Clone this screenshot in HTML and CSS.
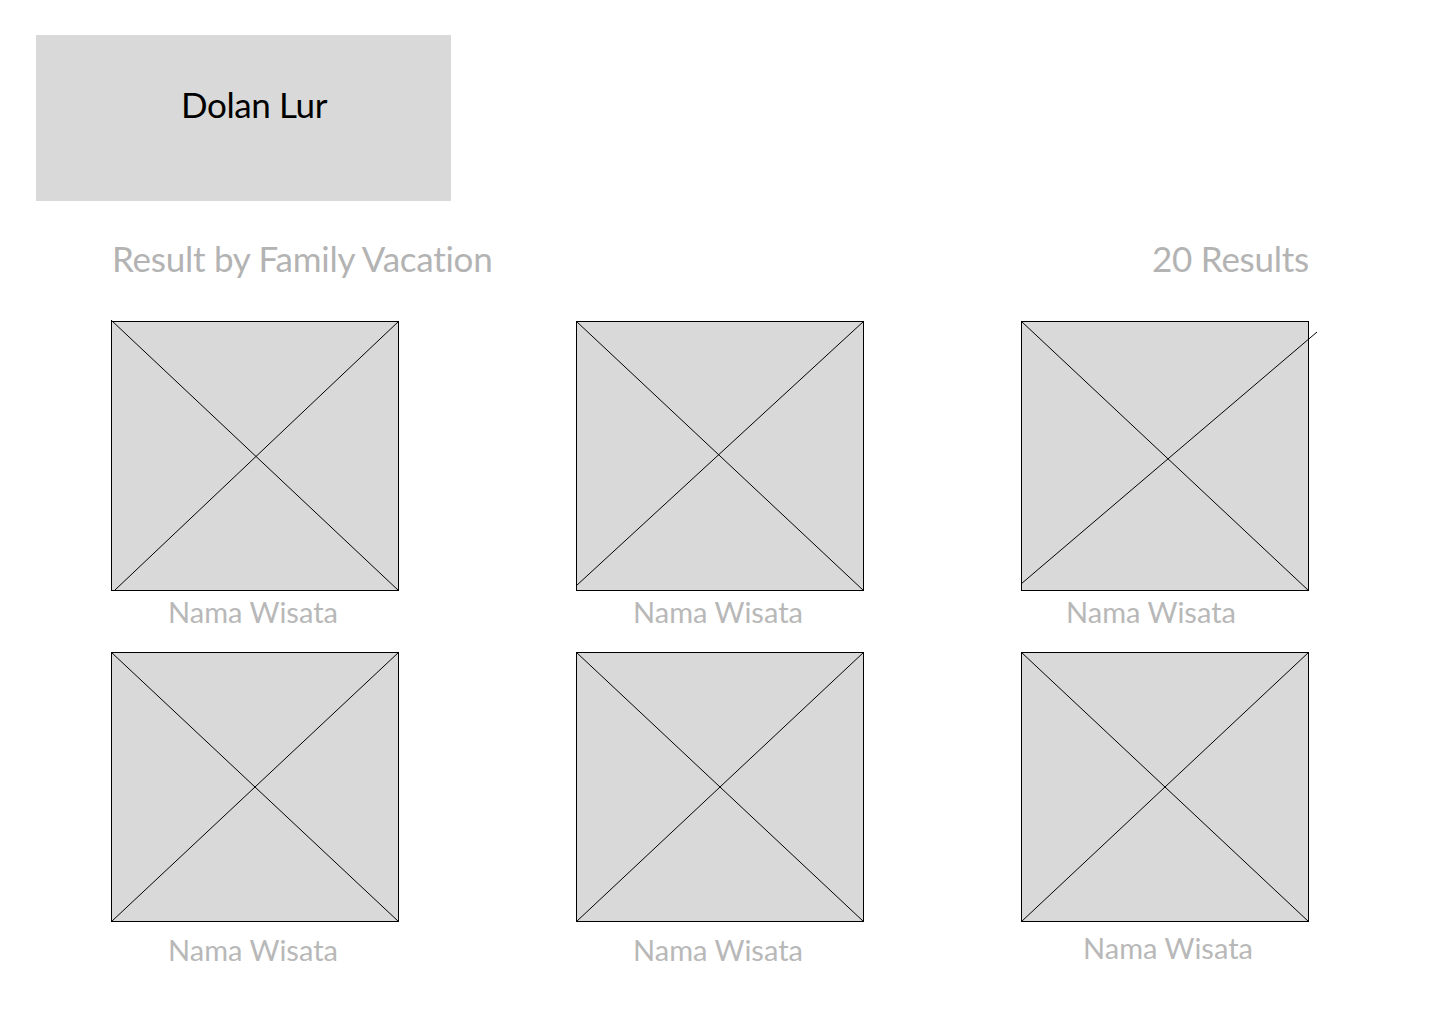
FILE: index.html
```html
<!DOCTYPE html>
<html lang="id">
<head>
<meta charset="utf-8">
<title>Dolan Lur - Result by Family Vacation</title>
<link rel="stylesheet" href="styles.css">
</head>
<body>
<header class="brand">
  <span class="brand-name">Dolan Lur</span>
</header>

<section class="results">
  <div class="results-head">
    <h1 class="results-title">Result by Family Vacation</h1>
    <span class="results-count">20 Results</span>
  </div>

  <div class="grid">
    <div class="card">
      <div class="thumb"><svg class="thumb-x" viewBox="0 0 288 270" preserveAspectRatio="none"><line x1="0" y1="-1" x2="288" y2="270"/><line x1="4" y1="269" x2="288" y2="0"/></svg></div>
      <p class="card-label">Nama Wisata</p>
    </div>
    <div class="card">
      <div class="thumb"><svg class="thumb-x" viewBox="0 0 288 270" preserveAspectRatio="none"><line x1="0" y1="0" x2="288" y2="270"/><line x1="0" y1="265" x2="288" y2="0"/></svg></div>
      <p class="card-label">Nama Wisata</p>
    </div>
    <div class="card">
      <div class="thumb"><svg class="thumb-x" viewBox="0 0 288 270" preserveAspectRatio="none"><line x1="0" y1="0" x2="288" y2="270"/><line x1="0" y1="263" x2="296" y2="11"/></svg></div>
      <p class="card-label card-label--shift">Nama Wisata</p>
    </div>
    <div class="card card--row2">
      <div class="thumb"><svg class="thumb-x" viewBox="0 0 288 270" preserveAspectRatio="none"><line x1="0" y1="0" x2="288" y2="270"/><line x1="0" y1="270" x2="288" y2="0"/></svg></div>
      <p class="card-label card-label--low">Nama Wisata</p>
    </div>
    <div class="card card--row2">
      <div class="thumb"><svg class="thumb-x" viewBox="0 0 288 270" preserveAspectRatio="none"><line x1="0" y1="0" x2="288" y2="270"/><line x1="0" y1="270" x2="288" y2="0"/></svg></div>
      <p class="card-label card-label--low">Nama Wisata</p>
    </div>
    <div class="card card--row2">
      <div class="thumb"><svg class="thumb-x" viewBox="0 0 288 270" preserveAspectRatio="none"><line x1="0" y1="0" x2="288" y2="270"/><line x1="0" y1="270" x2="288" y2="0"/></svg></div>
      <p class="card-label card-label--low card-label--up">Nama Wisata</p>
    </div>
  </div>
</section>
</body>
</html>
```

FILE: styles.css
```css
* { box-sizing: border-box; }

html, body {
  margin: 0;
  padding: 0;
  background: #ffffff;
}

body {
  font-family: "Lato", "Open Sans", sans-serif;
  width: 1440px;
  height: 1024px;
  overflow: hidden;
}

.brand {
  margin: 35px 0 0 36px;
  width: 415px;
  height: 166px;
  background: #d9d9d9;
  padding: 52px 0 0 145px;
}

.brand-name {
  display: block;
  font-size: 35px;
  line-height: 35px;
  letter-spacing: -0.4px;
  color: #000000;
  font-weight: 400;
}

.results {
  padding: 0 0 0 111px;
}

.results-head {
  width: 1198px;
  margin-top: 38px;
  display: flex;
  justify-content: space-between;
  align-items: baseline;
  padding-left: 1px;
}

.results-title,
.results-count {
  margin: 0;
  font-size: 35px;
  line-height: 38px;
  letter-spacing: -0.25px;
  font-weight: 400;
  color: #b3b3b3;
}

.grid {
  margin-top: 44px;
  display: grid;
  grid-template-columns: 465px 445px 288px;
  grid-template-rows: 331px auto;
}

.card {
  width: 288px;
  display: flex;
  flex-direction: column;
  align-items: center;
}

.thumb {
  width: 288px;
  height: 270px;
  background: #d9d9d9;
  border: 1px solid #000000;
  position: relative;
}

.thumb-x {
  position: absolute;
  left: -1px;
  top: -1px;
  width: 288px;
  height: 270px;
  overflow: visible;
}

.thumb-x line {
  stroke: #000000;
  stroke-width: 1;
  vector-effect: non-scaling-stroke;
}

.card-label {
  margin: 6px 0 0;
  font-size: 29px;
  line-height: 29px;
  color: #b8b8b8;
  font-weight: 400;
  transform: translateX(-2px);
}

.card-label--shift {
  transform: translateX(-14px);
}

.card-label--low {
  margin-top: 13px;
}

.card-label--up {
  margin-top: 11px;
  transform: translateX(3px);
}
```
